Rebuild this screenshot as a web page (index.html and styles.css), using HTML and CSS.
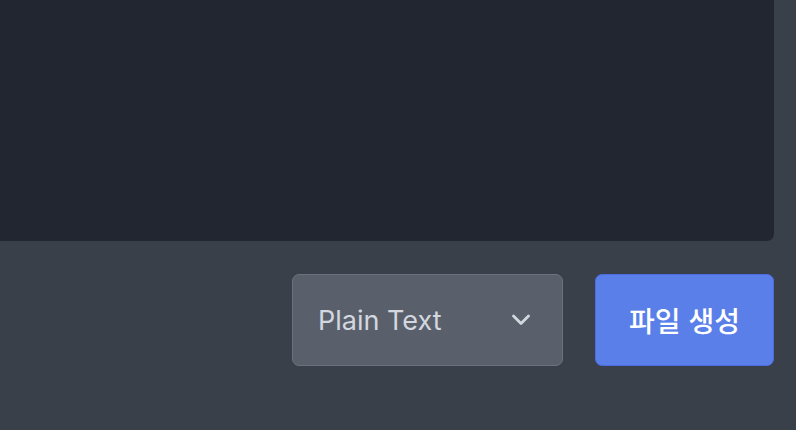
FILE: index.html
```html
<!DOCTYPE html>
<html lang="ko">
<head>
<meta charset="utf-8">
<link rel="stylesheet" href="styles.css">
</head>
<body>
<div class="page">
  <div class="editor"></div>
  <div class="actions">
    <div class="select">
      <span class="select-label">Plain Text</span>
      <svg class="chevron" width="20" height="14" viewBox="0 0 20 14"><path d="M2.5 3 L10 10.5 L17.5 3" fill="none" stroke="#d3d7df" stroke-width="2.8" stroke-linecap="round" stroke-linejoin="round"/></svg>
    </div>
    <button class="btn">파일 생성</button>
  </div>
</div>
</body>
</html>
```
FILE: styles.css
```css
html, body {
  margin: 0;
  padding: 0;
  background: #3a404a;
  width: 796px;
  height: 430px;
  overflow: hidden;
}
.page {
  padding-right: 22px;
  display: flex;
  flex-direction: column;
}
.editor {
  height: 241px;
  background: #222631;
  border-bottom-right-radius: 7px;
}
.actions {
  margin-top: 33px;
  display: flex;
  justify-content: flex-end;
  gap: 32px;
}
.select {
  box-sizing: border-box;
  width: 271px;
  height: 92px;
  background: #5a606b;
  border: 1.5px solid #6b717d;
  border-radius: 7px;
  display: flex;
  align-items: center;
  justify-content: space-between;
  padding: 0 31px 0 25px;
}
.select-label {
  font-family: Inter, "Noto Sans", sans-serif;
  font-size: 27px;
  color: #d3d7df;
}
.chevron {
  display: block;
}
.btn {
  box-sizing: border-box;
  width: 179px;
  height: 92px;
  background: #5b7fe9;
  border: 1.5px solid #4a6ee0;
  border-radius: 7px;
  color: #ffffff;
  font-family: "Noto Sans CJK KR", sans-serif;
  font-size: 28px;
  font-weight: 500;
  padding: 0;
}
```
